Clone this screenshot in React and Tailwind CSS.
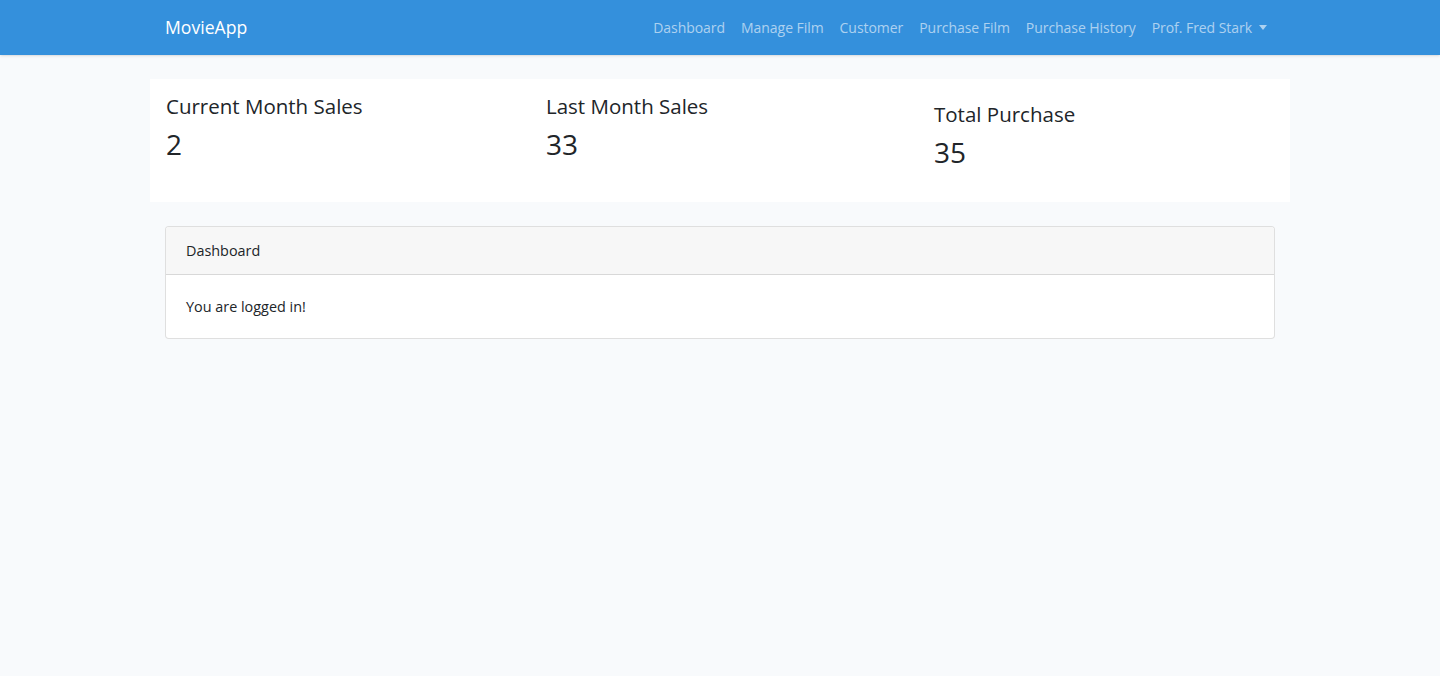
import React from 'react';

const font = { fontFamily: '"Open Sans", "Noto Sans", sans-serif' };

function NavLink({ children }) {
  return (
    <a href="#" className="px-2 text-[14px] tracking-[-0.05px] text-white/60 hover:text-white/80">
      {children}
    </a>
  );
}

function Stat({ title, value, className = '' }) {
  return (
    <div className={className}>
      <h4 className="text-[20.5px] leading-[1.2] text-[#212529]">{title}</h4>
      <h2 className="mt-[9px] text-[28px] leading-[1.2] text-[#212529]">{value}</h2>
    </div>
  );
}

export default function App() {
  return (
    <div className="min-h-[676px] bg-[#f8fafc] text-[#212529]" style={font}>
      <nav className="h-[55px] bg-[#3490dc] shadow-sm">
        <div className="mx-auto flex h-full w-[1140px] items-center justify-between px-[15px]">
          <a href="#" className="text-[17.6px] text-white">MovieApp</a>
          <div className="flex items-center">
            <NavLink>Dashboard</NavLink>
            <NavLink>Manage Film</NavLink>
            <NavLink>Customer</NavLink>
            <NavLink>Purchase Film</NavLink>
            <NavLink>Purchase History</NavLink>
            <a href="#" className="flex items-center px-2 text-[14px] tracking-[-0.05px] text-white/60">
              Prof. Fred Stark
              <span className="ml-[7px] inline-block border-x-[4px] border-t-[5px] border-x-transparent border-t-white/60" />
            </a>
          </div>
        </div>
      </nav>

      <main className="py-6">
        <div className="mx-auto w-[1140px]">
          <div className="flex h-[123px] bg-white pt-[15px]">
            <Stat title="Current Month Sales" value="2" className="w-[380px] px-4" />
            <Stat title="Last Month Sales" value="33" className="w-[380px] px-4" />
            <Stat title="Total Purchase" value="35" className="ml-[8px] mt-[8px] px-4" />
          </div>

          <div className="mx-[15px] mt-6 overflow-hidden rounded border border-black/[.125] bg-white">
            <div className="flex h-[48px] items-center border-b border-black/[.125] bg-[#f7f7f7] px-5 text-[14.4px]">
              Dashboard
            </div>
            <div className="flex h-[63px] items-center px-5 text-[14.4px]">
              You are logged in!
            </div>
          </div>
        </div>
      </main>
    </div>
  );
}
